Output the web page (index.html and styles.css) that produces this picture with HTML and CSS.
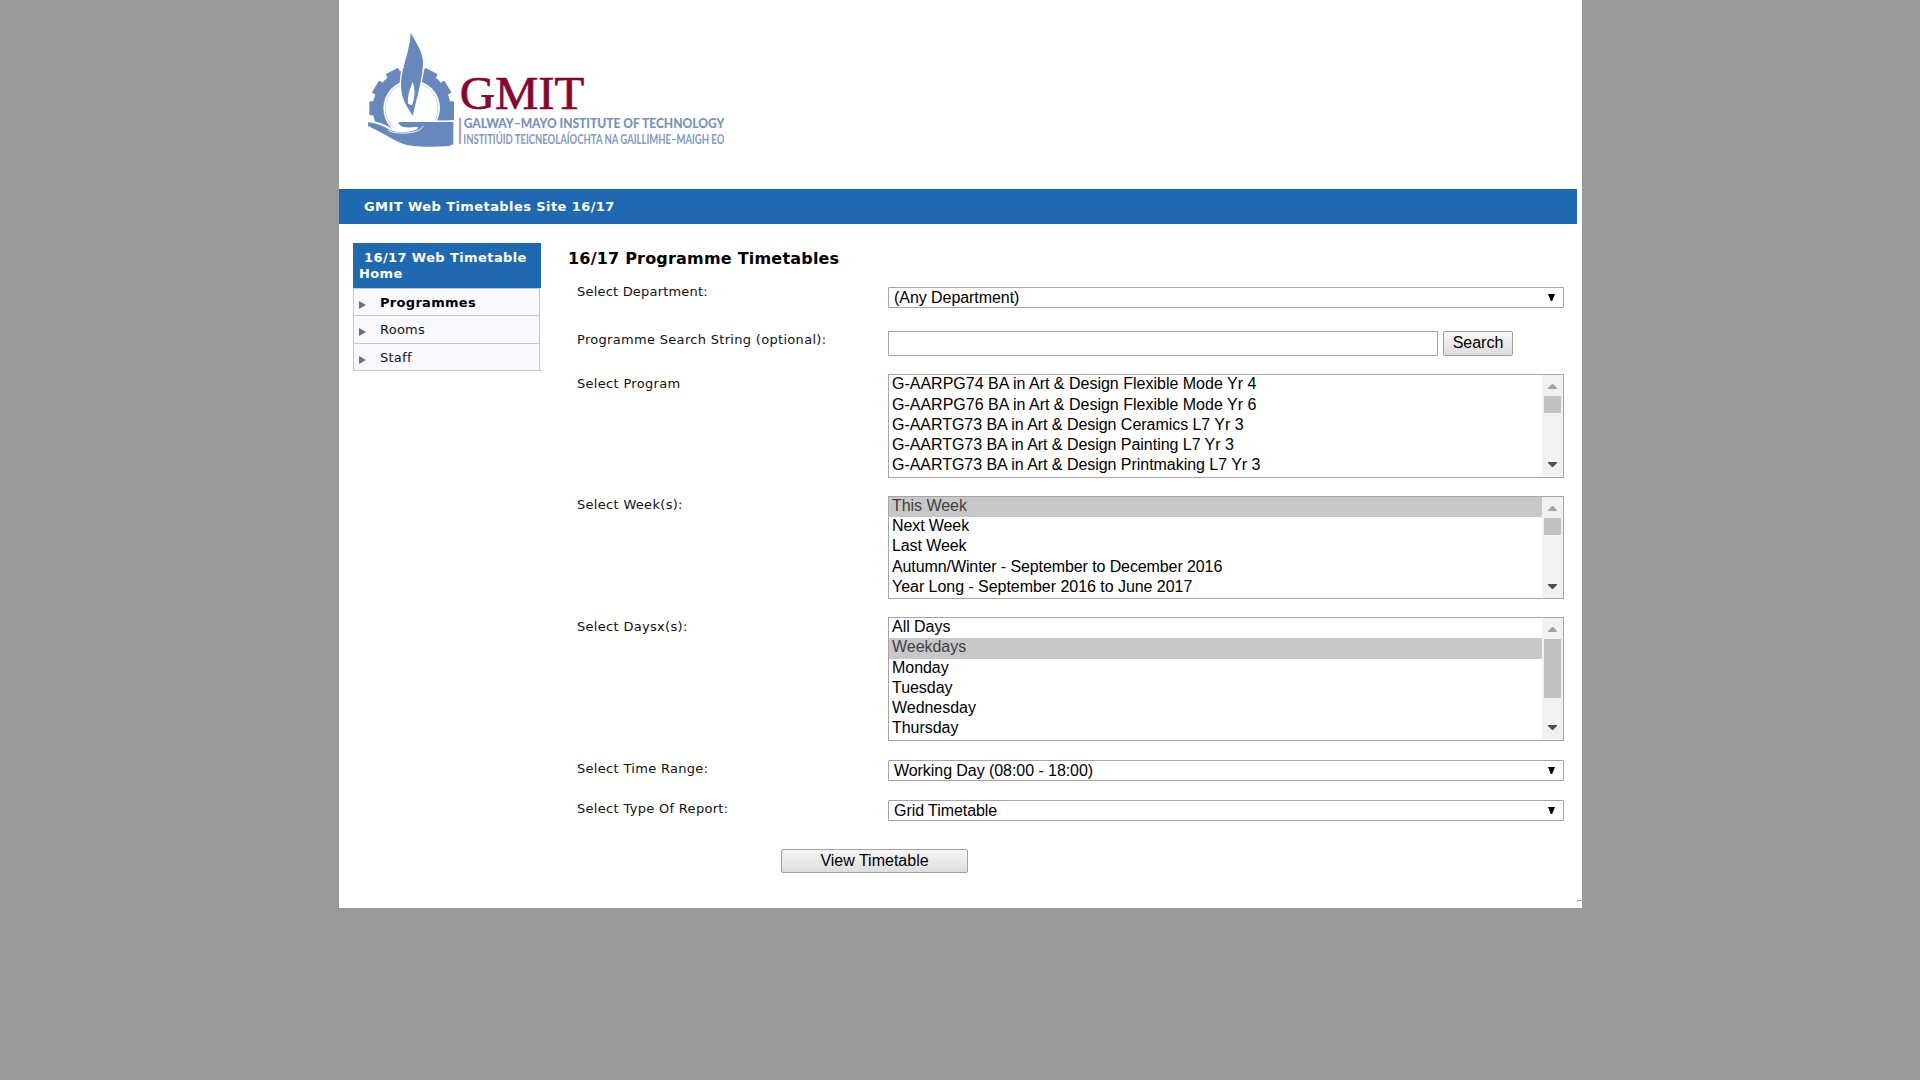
FILE: index.html
```html
<!DOCTYPE html>
<html lang="en">
<head>
<meta charset="utf-8">
<title>GMIT Web Timetables</title>
<link rel="stylesheet" href="styles.css">
</head>
<body>
<div class="page">
  <header class="masthead">
    <svg class="logo" viewBox="12 0 1260 540" role="img" aria-label="GMIT">
      <g fill="#6688bd">
        <circle cx="230" cy="325" r="117"/>
        <rect x="103" y="304" width="30" height="42" rx="3"/>
        <rect x="103" y="304" width="30" height="42" rx="3" transform="rotate(31 230 325)"/>
        <rect x="103" y="304" width="30" height="42" rx="3" transform="rotate(62 230 325)"/>
        <rect x="103" y="304" width="30" height="42" rx="3" transform="rotate(118 230 325)"/>
        <rect x="103" y="304" width="30" height="42" rx="3" transform="rotate(149 230 325)"/>
        <rect x="327" y="304" width="30" height="42" rx="3"/>
        <circle cx="230" cy="325" r="85" fill="#fff"/>
        <circle cx="230" cy="325" r="79" fill="none" stroke="#b5c0da" stroke-width="2"/>
        <path d="M92 361C130 364 152 374 180 391L198 361H362V448H92Z" fill="#fff"/>
        <path d="M307 361L315 335H345L357 346V361Z"/>
        <path d="M99 367C135 371 145 380 166 390C192 402 232 396 247 387Q255 380 243 381C215 384 200 383 191 371Q188 365 197 366H355V433L343 438C290 442 240 440 212 434C180 424 150 402 99 378Z"/>
        <path d="M160 391C185 405 255 402 265 378" fill="none" stroke="#fff" stroke-width="3"/>
        <path d="M227 98C243 128 266 158 264 192C262 235 247 290 233 347C216 320 202 300 199 270C193 210 224 165 227 98Z" stroke="#fff" stroke-width="9" paint-order="stroke"/>
        <path d="M233 246C241 265 240 292 231 316L219 311C217 288 225 265 233 246Z" fill="#fff"/>
      </g>
      <path d="M375 353V432" stroke="#c8607c" stroke-width="4"/>
      <text class="logo-name" x="374" y="326" textLength="374" lengthAdjust="spacingAndGlyphs">GMIT</text>
      <text class="logo-en" x="386" y="384" textLength="782" lengthAdjust="spacingAndGlyphs">GALWAY–MAYO INSTITUTE OF TECHNOLOGY</text>
      <text class="logo-ga" x="385" y="432" textLength="783" lengthAdjust="spacingAndGlyphs">INSTITIÚID TEICNEOLAÍOCHTA NA GAILLIMHE–MAIGH EO</text>
    </svg>
  </header>
  <div class="banner">GMIT Web Timetables Site 16/17</div>
  <div class="columns">
    <nav class="side">
      <div class="side-head"><span>16/17 Web Timetable</span> Home</div>
      <ul class="menu">
        <li class="current"><svg class="bullet" viewBox="0 0 7 8"><path d="M0 0L7 4L0 8Z"/></svg>Programmes</li>
        <li><svg class="bullet" viewBox="0 0 7 8"><path d="M0 0L7 4L0 8Z"/></svg>Rooms</li>
        <li><svg class="bullet" viewBox="0 0 7 8"><path d="M0 0L7 4L0 8Z"/></svg>Staff</li>
      </ul>
    </nav>
    <main class="content">
      <h1>16/17 Programme Timetables</h1>
      <div class="form">
        <label class="first">Select Department:</label>
        <div class="drop">(Any Department)<svg class="caret" viewBox="0 0 7 7"><path d="M0 0H7L4.2 7H2.8Z"/></svg></div>
        <label>Programme Search String (optional):</label>
        <div class="search"><div class="input"></div><div class="button">Search</div></div>
        <label class="low">Select Program</label>
        <div class="list">
          <div class="options"><div class="wide tall">G-AARPG74 BA in Art &amp; Design Flexible Mode Yr 4</div><div class="wide">G-AARPG76 BA in Art &amp; Design Flexible Mode Yr 6</div><div>G-AARTG73 BA in Art &amp; Design Ceramics L7 Yr 3</div><div>G-AARTG73 BA in Art &amp; Design Painting L7 Yr 3</div><div>G-AARTG73 BA in Art &amp; Design Printmaking L7 Yr 3</div></div>
          <div class="scroll"><svg class="up" viewBox="0 0 9 5"><path d="M4 0H5L9 4V5H0V4Z"/></svg><div class="thumb"></div><svg class="down" viewBox="0 0 9 5"><path d="M0 0H9V1L5 5H4L0 1Z"/></svg></div>
        </div>
        <label>Select Week(s):</label>
        <div class="list weeks">
          <div class="options"><div class="on">This Week</div><div class="tight">Next Week</div><div class="tall tight">Last Week</div><div class="tight">Autumn/Winter - September to December 2016</div><div>Year Long - September 2016 to June 2017</div></div>
          <div class="scroll"><svg class="up" viewBox="0 0 9 5"><path d="M4 0H5L9 4V5H0V4Z"/></svg><div class="thumb"></div><svg class="down" viewBox="0 0 9 5"><path d="M0 0H9V1L5 5H4L0 1Z"/></svg></div>
        </div>
        <label class="low">Select Daysx(s):</label>
        <div class="list days">
          <div class="options"><div>All Days</div><div class="on tall">Weekdays</div><div>Monday</div><div>Tuesday</div><div>Wednesday</div><div>Thursday</div></div>
          <div class="scroll"><svg class="up" viewBox="0 0 9 5"><path d="M4 0H5L9 4V5H0V4Z"/></svg><div class="thumb"></div><svg class="down" viewBox="0 0 9 5"><path d="M0 0H9V1L5 5H4L0 1Z"/></svg></div>
        </div>
        <label>Select Time Range:</label>
        <div class="drop">Working Day (08:00 - 18:00)<svg class="caret" viewBox="0 0 7 7"><path d="M0 0H7L4.2 7H2.8Z"/></svg></div>
        <label>Select Type Of Report:</label>
        <div class="drop">Grid Timetable<svg class="caret" viewBox="0 0 7 7"><path d="M0 0H7L4.2 7H2.8Z"/></svg></div>
      </div>
      <div class="button view">View Timetable</div>
    </main>
  </div>
  <div class="corner"></div>
</div>
</body>
</html>
```
FILE: styles.css
```css
body { margin: 0; height: 1080px; overflow: hidden; background: #999; color: #111; font: 13px/16px "DejaVu Sans", Verdana, sans-serif; }
.page { position: relative; box-sizing: border-box; width: 1243px; height: 908px; margin-left: 339px; background: #fff; }
.masthead { height: 189px; }
.logo { display: block; width: 420px; height: 180px; }
.logo-name { font: 140px "Liberation Serif", serif; fill: #85062f; stroke: #85062f; stroke-width: 2px; }
.logo-en { font: 900 41px Lato, sans-serif; fill: #7592c0; }
.logo-ga { font: bold 41px Lato, sans-serif; fill: #8299c2; }
.banner { box-sizing: border-box; width: 1238px; height: 35px; padding: 10px 0 0 25px; background: #1f69b1; color: #fff; font-weight: bold; letter-spacing: 0.42px; }
.columns { display: flex; }
.side { width: 189px; padding: 19px 0 0 14px; }
.side-head { box-sizing: border-box; width: 188px; height: 45px; padding: 7px 0 0 6px; background: #1f69b1; color: #fff; font-weight: bold; letter-spacing: 0.4px; }
.side-head span { display: block; margin-left: 5px; }
.menu { list-style: none; margin: 0; padding: 0; border-bottom: 1px solid #c8c8c8; }
.menu li { display: flex; box-sizing: border-box; width: 187px; height: 27px; padding: 6px 0 0 5px; border: 1px solid #c8c8c8; border-bottom: 0; background: #f8f8ff; letter-spacing: 0.25px; }
.menu li:nth-child(2) { height: 28px; }
.menu .current { font-weight: bold; color: #000; letter-spacing: 0.3px; }
.bullet { width: 7px; height: 8px; margin: 6px 14px 0 0; fill: #707070; }
.content { padding: 0 0 0 26px; }
h1 { margin: 25px 0 0; height: 38px; font-size: 16px; line-height: 20px; letter-spacing: 0.2px; color: #000; }
.form { display: grid; grid-template-columns: 311px 676px; grid-template-rows: 44px 43px 122px 121px 143px 40px 49px; padding-left: 9px; align-items: start; }
label { margin-top: 1px; letter-spacing: 0.31px; }
.first { margin-top: -3px; letter-spacing: 0.2px; }
.low { margin-top: 2px; }
.drop, .button, .options { font: 16px/19px "Liberation Sans", Arial, sans-serif; color: #000; }
.drop { display: flex; justify-content: space-between; box-sizing: border-box; height: 21px; padding: 0 8px 0 5px; border: 1px solid #a6a6a6; border-radius: 1px; letter-spacing: -0.06px; }
.caret { width: 7px; height: 7px; margin-top: 6px; }
.search { display: flex; gap: 5px; }
.input { box-sizing: border-box; width: 550px; height: 25px; border: 1px solid #a6a6a6; }
.button { box-sizing: border-box; width: 70px; height: 25px; border: 1px solid #a0a0a0; border-radius: 2px; background: linear-gradient(#f6f6f6, #ddd); text-align: center; line-height: 21px; }
.list { display: flex; box-sizing: border-box; height: 104px; border: 1px solid #a6a6a6; }
.weeks { height: 103px; }
.days { height: 124px; }
.options { flex: 1; }
.options div { height: 20px; padding-left: 3px; line-height: 17px; letter-spacing: -0.04px; }
.options .tall { height: 21px; }
.options .wide { letter-spacing: 0; }
.options .tight { letter-spacing: -0.1px; }
.options .on { background: #c8c8c8; color: #404040; }
.scroll { display: flex; flex-direction: column; align-items: center; box-sizing: border-box; width: 21px; height: 101px; padding: 9px 0; background: #f1f1f1; }
.days .scroll { height: 121px; }
.up, .down { width: 9px; height: 5px; fill: #a3a3a3; }
.down { margin-top: auto; fill: #505050; }
.thumb { width: 17px; height: 17px; margin-top: 7px; background: #c1c1c1; }
.days .thumb { height: 59px; }
.view { width: 187px; height: 24px; margin-left: 213px; }
.corner { position: absolute; right: 0; bottom: 6px; width: 4px; height: 1px; border: solid #a6a6a6; border-width: 1px 0 0 1px; }
```
